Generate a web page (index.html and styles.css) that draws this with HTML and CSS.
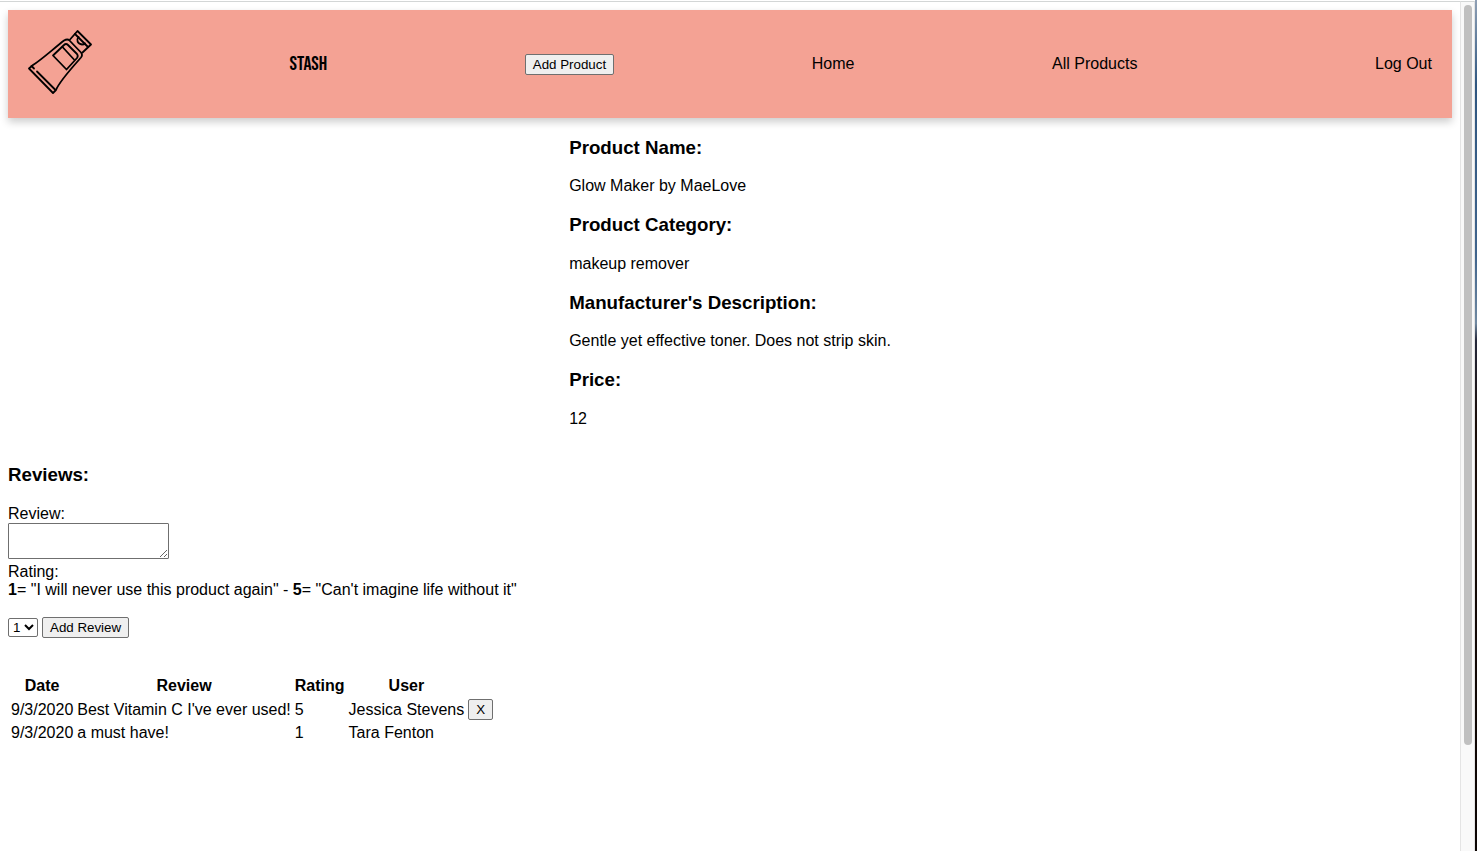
FILE: index.html
```html
<!DOCTYPE html>
<html lang="en">
<head>
<meta charset="utf-8">
<title>Stash</title>
<link rel="stylesheet" href="styles.css">
</head>
<body>
<div class="window">
  <div class="page">
    <header class="nav">
      <svg class="logo" viewBox="0 0 64 64" fill="none" stroke="#000" stroke-width="1.8" stroke-linecap="round" stroke-linejoin="round" aria-hidden="true">
        <path d="M1 38.500L25 63 28 60C31 52 41 41 53 27.500Q55 25 53 22.500L41.500 10.500Q39.500 8.500 36 10.500C24 20 13 30 5 35Z"/>
        <path d="M3.500 36L6 38.500M9 41.500L27 59.500"/>
        <path d="M42 9.500L49.500 1 63 14.500 54.500 22.500"/>
        <path d="M47 4L60 17"/>
        <path d="M50.500 7C48 10 49.500 14 54 14.500Q56 14.500 57 13.500"/>
        <path d="M25 25.500L36 15Q38 13 40 15L49 24Q50.500 26 49 28L38.500 39.500Z"/>
        <path d="M34.500 17L46 29.500"/>
      </svg>
      <span class="brand">STASH</span>
      <button type="button" class="button">Add Product</button>
      <a class="link" href="#home">Home</a>
      <a class="link" href="#products">All Products</a>
      <div class="account"><a class="link" href="#logout">Log Out</a></div>
    </header>
    <main>
      <section class="product">
        <div class="details">
          <h3>Product Name:</h3>
          <p>Glow Maker by MaeLove</p>
          <h3>Product Category:</h3>
          <p>makeup remover</p>
          <h3>Manufacturer's Description:</h3>
          <p>Gentle yet effective toner. Does not strip skin.</p>
          <h3>Price:</h3>
          <p>12</p>
        </div>
      </section>
      <section>
        <h3>Reviews:</h3>
        <form class="form">
          <label for="review">Review:</label>
          <textarea id="review" class="review"></textarea>
          <label for="rating">Rating:</label>
          <div><b>1</b>= "I will never use this product again" - <b>5</b>= "Can't imagine life without it"</div>
          <div class="actions">
            <select id="rating" class="rating"><option>1</option><option>2</option><option>3</option><option>4</option><option>5</option></select>
            <button type="button" class="button">Add Review</button>
          </div>
        </form>
        <table class="reviews">
          <thead><tr><th>Date</th><th>Review</th><th>Rating</th><th>User</th></tr></thead>
          <tbody>
            <tr><td>9/3/2020</td><td>Best Vitamin C I've ever used!</td><td>5</td><td>Jessica Stevens</td><td><button type="button" class="button" aria-label="X, delete review">X</button></td></tr>
            <tr><td>9/3/2020</td><td>a must have!</td><td>1</td><td>Tara Fenton</td></tr>
          </tbody>
        </table>
      </section>
    </main>
  </div>
  <div class="scrollbar"><div class="thumb"></div></div>
  <div class="edge"></div>
</div>
</body>
</html>
```
FILE: styles.css
```css
* { box-sizing: border-box; }
body {
  margin: 0;
  background: #fff;
  color: #000;
  font-family: "Liberation Sans", Arial, sans-serif;
  font-size: 16px;
}
.window { display: flex; min-height: 100vh; }
.page {
  flex: 1;
  margin-top: 1px;
  padding: 8px;
  border-top: 1px solid #d3d6d6;
}
.nav {
  display: flex;
  justify-content: space-between;
  align-items: center;
  padding: 20px;
  min-height: 108px;
  background: #f4a294;
  box-shadow: 0 4px 8px rgba(0, 0, 0, 0.2);
}
.logo { width: 64px; height: 64px; margin-bottom: 4px; }
.brand {
  font-family: "Bebas Neue", "Liberation Sans Narrow", "DejaVu Sans Condensed", sans-serif;
  font-size: 20px;
  font-weight: 400;
}
.link { color: #000; text-decoration: none; }
.account { padding-left: 40px; }
.button {
  height: 21px;
  padding: 1px 7px;
  border: 1px solid #6f6f6f;
  border-radius: 2px;
  background: #efefef;
  color: #000;
  font-family: inherit;
}
.product { display: flex; justify-content: center; padding-bottom: 2px; }
.form { display: flex; flex-direction: column; align-items: flex-start; }
.review {
  width: 161px;
  height: 36px;
  margin: 0 0 4px;
  border: 1px solid #6f6f6f;
  border-radius: 1px;
  resize: both;
}
.actions { display: flex; align-items: center; gap: 4px; margin: 18px 0 36px; }
.rating {
  width: 30px;
  height: 19px;
  padding: 0;
  border: 1px solid #6f6f6f;
  border-radius: 2px;
  background: #fff;
  color: #000;
  font-family: inherit;
}
.reviews { border-spacing: 2px; }
.reviews th, .reviews td { padding: 1px; }
.scrollbar {
  width: 15px;
  margin-top: 1px;
  padding: 3px;
  border: 1px solid #e4e4e4;
  border-top-color: #d3d6d6;
  border-bottom: 0;
  background: #f9f9f9;
}
.thumb { width: 8px; height: 87vh; border-radius: 4px; background: #c0c0c0; }
.edge {
  width: 2px;
  background: linear-gradient(#8fa0b5, #2f5680 10%, #40648c 30%, #7088a0 38%, #25283a 40%, #1a0d08 50%, #0c0503);
}
```
